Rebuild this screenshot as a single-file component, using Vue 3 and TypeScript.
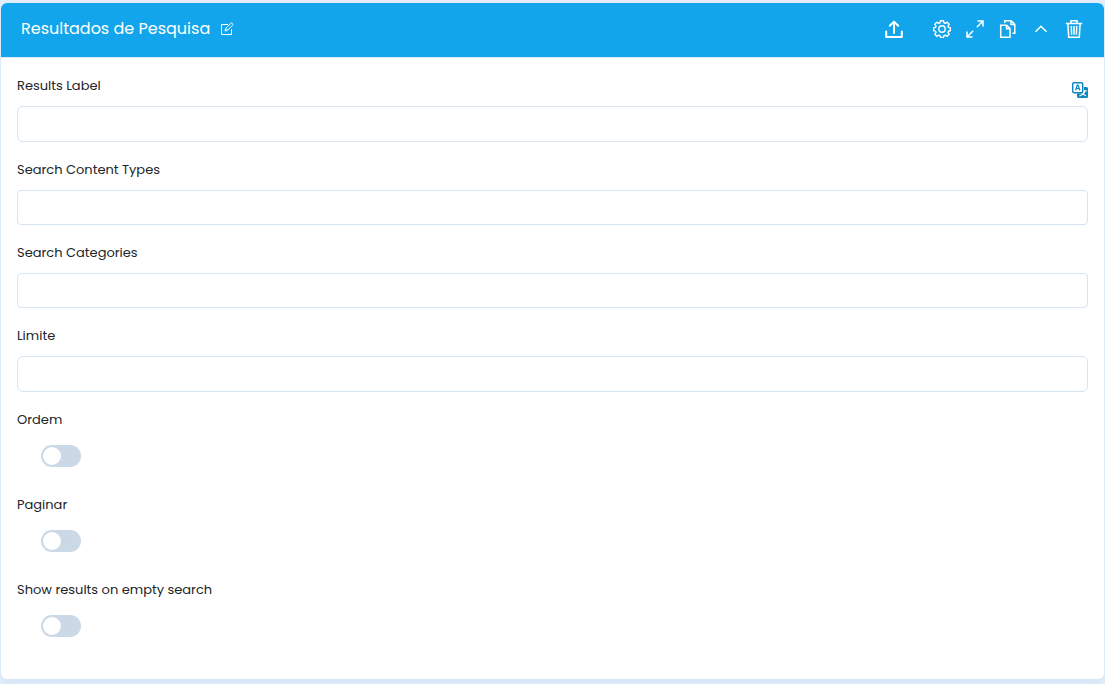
<script setup lang="ts">
import { reactive } from 'vue'

interface TextField {
  id: string
  label: string
  compact: boolean
  translatable: boolean
}

interface ToggleField {
  id: string
  label: string
}

const textFields: TextField[] = [
  { id: 'results-label', label: 'Results Label', compact: false, translatable: true },
  { id: 'content-types', label: 'Search Content Types', compact: true, translatable: false },
  { id: 'categories', label: 'Search Categories', compact: true, translatable: false },
  { id: 'limit', label: 'Limite', compact: false, translatable: false },
]

const toggleFields: ToggleField[] = [
  { id: 'order', label: 'Ordem' },
  { id: 'paginate', label: 'Paginar' },
  { id: 'show-empty', label: 'Show results on empty search' },
]

const values = reactive<Record<string, string>>({})
const toggles = reactive<Record<string, boolean>>({})
</script>

<template>
  <main class="page">
    <section class="card">
      <header class="head">
        <h2 class="title">Resultados de Pesquisa</h2>
        <button class="icon-btn edit" type="button" aria-label="Edit title">
          <svg width="14" height="14" viewBox="0 0 14 14">
            <path d="M8 2.5H1.5v10h10V7" />
            <path d="M5 9l.7-2.6L11.4 .8l1.8 1.8L7.5 8.3z M6 6.500l1.500 1.600" />
          </svg>
        </button>
        <div class="actions">
          <button class="icon-btn upload" type="button" aria-label="Upload">
            <svg width="18" height="18" viewBox="0 0 18 18" class="bold">
              <path d="M1.200 11.500V17h15.600v-5.500M9 13V1.800M4.800 5.800L9 1.600l4.200 4.200" />
            </svg>
          </button>
          <button class="icon-btn" type="button" aria-label="Settings">
            <svg width="18" height="18" viewBox="0 0 18 18" class="gear">
              <path d="M7.500 .7h3l.5 2.100 1.300.6 1.900-1.200 2 2-1.200 1.900.6 1.300 1.800.4v2.900l-1.900.5-.5 1.200 1.200 1.900-2.100 2-1.800-1.200-1.300.6-.5 1.700h-3L7 15.700l-1.300-.6-1.900 1.200-2-2L3 12.400l-.6-1.200-1.800-.5V7.800l1.900-.4.5-1.300-1.200-1.900 2-2 1.900 1.200L7 2.800z" />
              <circle cx="9" cy="9" r="3.200" />
            </svg>
          </button>
          <button class="icon-btn" type="button" aria-label="Expand">
            <svg width="18" height="18" viewBox="0 0 18 18" class="medium">
              <path d="M11.500 1H17v5.500M17 1l-6.200 6.200M6.500 17H1v-5.500M1 17l6.200-6.200" />
            </svg>
          </button>
          <button class="icon-btn" type="button" aria-label="Duplicate">
            <svg width="18" height="18" viewBox="0 0 18 18" class="medium">
              <path d="M1.700 5.200h6l3.300 3.300v8.800H1.700z M7.500 5.300v3.500h3.500" />
              <path d="M5.700 3V.8h6.500l3.600 3.600v8.800H13.500M12 1v3.600h3.600" />
            </svg>
          </button>
          <button class="icon-btn" type="button" aria-label="Collapse">
            <svg width="18" height="18" viewBox="0 0 18 18" class="medium">
              <path d="M3.500 11.800L9 6.300l5.500 5.500" />
            </svg>
          </button>
          <button class="icon-btn" type="button" aria-label="Delete">
            <svg width="18" height="18" viewBox="0 0 18 18" class="medium">
              <path d="M.8 3.500h16.400M6 3.300V.8h6v2.500M2.900 3.700l.8 13.600h10.600l.8-13.600M6.300 6l.3 8.800M9 6v8.800M11.700 6l-.3 8.800" />
            </svg>
          </button>
        </div>
      </header>

      <form class="body" @submit.prevent>
        <div v-for="field in textFields" :key="field.id" class="field">
          <div class="label-row">
            <label :for="field.id">{{ field.label }}</label>
            <button v-if="field.translatable" class="icon-btn translate" type="button" aria-label="Translate">
              <svg width="16" height="16" viewBox="0 0 16 16">
                <path class="solid" d="M12 5h2.500A1.500 1.500 0 0 1 16 6.500v8a1.500 1.500 0 0 1-1.500 1.500h-8A1.500 1.500 0 0 1 5 14.500V11.500h5.500A1.500 1.500 0 0 0 12 10z" />
                <rect class="sheet" x=".7" y=".7" width="10" height="10" rx="1.300" />
                <path class="letter" d="M3.600 8.200L5.300 3.200h.8l1.700 5M4.200 6.500h3" />
                <path class="glyph" d="M7.500 13.800c3-.8 4.800-2.300 5.300-4.600M10.300 11.800l3.700 2M11.800 8.800h3" />
              </svg>
            </button>
          </div>
          <input :id="field.id" v-model="values[field.id]" type="text" class="text" :class="{ compact: field.compact }" />
        </div>

        <div v-for="field in toggleFields" :key="field.id" class="toggle-field">
          <label :for="field.id">{{ field.label }}</label>
          <input :id="field.id" v-model="toggles[field.id]" type="checkbox" role="switch" class="switch" />
        </div>
      </form>
    </section>
  </main>
</template>

<style>
body {
  margin: 0;
  background: #e4eefc;
}
</style>

<style scoped>
.page {
  box-sizing: border-box;
  min-height: 100vh;
  padding: 3px 1px 5px;
  overflow: hidden;
  font-family: Poppins, Inter, "Open Sans", sans-serif;
  color: #212529;
}

.card {
  border-radius: 6px;
  background: #fff;
  box-shadow: 0 4px 10px #d3e2f5;
}

.head {
  display: flex;
  align-items: center;
  height: 52px;
  padding: 0 21px 2px 20px;
  border-bottom: 1px solid #dfeaf9;
  border-radius: 6px 6px 0 0;
  background: #12a5eb;
  color: #fff;
}

.title {
  margin: 0;
  font-size: 16px;
  font-weight: 400;
  line-height: 24px;
}

.icon-btn {
  display: block;
  flex: none;
  padding: 0;
  border: 0;
  background: none;
  color: inherit;
  cursor: pointer;
}

.icon-btn svg {
  display: block;
  fill: none;
  stroke: currentColor;
  stroke-width: 1;
}

.icon-btn svg.bold {
  stroke-width: 2;
  stroke-linecap: round;
  stroke-linejoin: round;
}

.icon-btn svg.medium {
  stroke-width: 1.5;
}

.icon-btn svg.gear {
  stroke-width: 1.4;
  stroke-linejoin: round;
}

.edit {
  margin-left: 10px;
}

.actions {
  display: flex;
  gap: 15px;
  margin-left: auto;
}

.upload {
  margin-right: 15px;
}

.body {
  padding: 18px 16px 14px;
}

.field {
  margin-bottom: 18px;
}

.label-row {
  display: flex;
  justify-content: space-between;
  align-items: flex-start;
  height: 30px;
}

label {
  font-size: 13px;
  line-height: 20px;
}

.translate {
  margin-top: 6px;
  color: #0d86bd;
}

.translate .solid {
  fill: currentColor;
  stroke: none;
}

.translate .sheet {
  fill: #fff;
  stroke-width: 1.4;
}

.translate .letter {
  stroke-width: 1.2;
}

.translate .glyph {
  stroke: #fff;
  stroke-width: 1.2;
}

.text {
  display: block;
  box-sizing: border-box;
  width: 100%;
  height: 36px;
  padding: 0 12px;
  border: 1px solid #d8e3f0;
  border-radius: 6px;
  background: #fff;
  font: inherit;
  font-size: 13px;
}

.text.compact {
  height: 35px;
  border-radius: 4px;
}

.toggle-field {
  display: flex;
  flex-direction: column;
  align-items: flex-start;
  gap: 15px;
  margin-bottom: 28px;
}

.switch {
  appearance: none;
  display: flex;
  align-items: center;
  box-sizing: border-box;
  width: 40px;
  height: 22px;
  margin: 0 0 0 24px;
  padding: 2px;
  border-radius: 11px;
  background: #cbd9e6;
  cursor: pointer;
}

.switch::before {
  content: "";
  width: 18px;
  height: 18px;
  border-radius: 50%;
  background: #fff;
}

.switch:checked {
  justify-content: flex-end;
  background: #12a5eb;
}
</style>
